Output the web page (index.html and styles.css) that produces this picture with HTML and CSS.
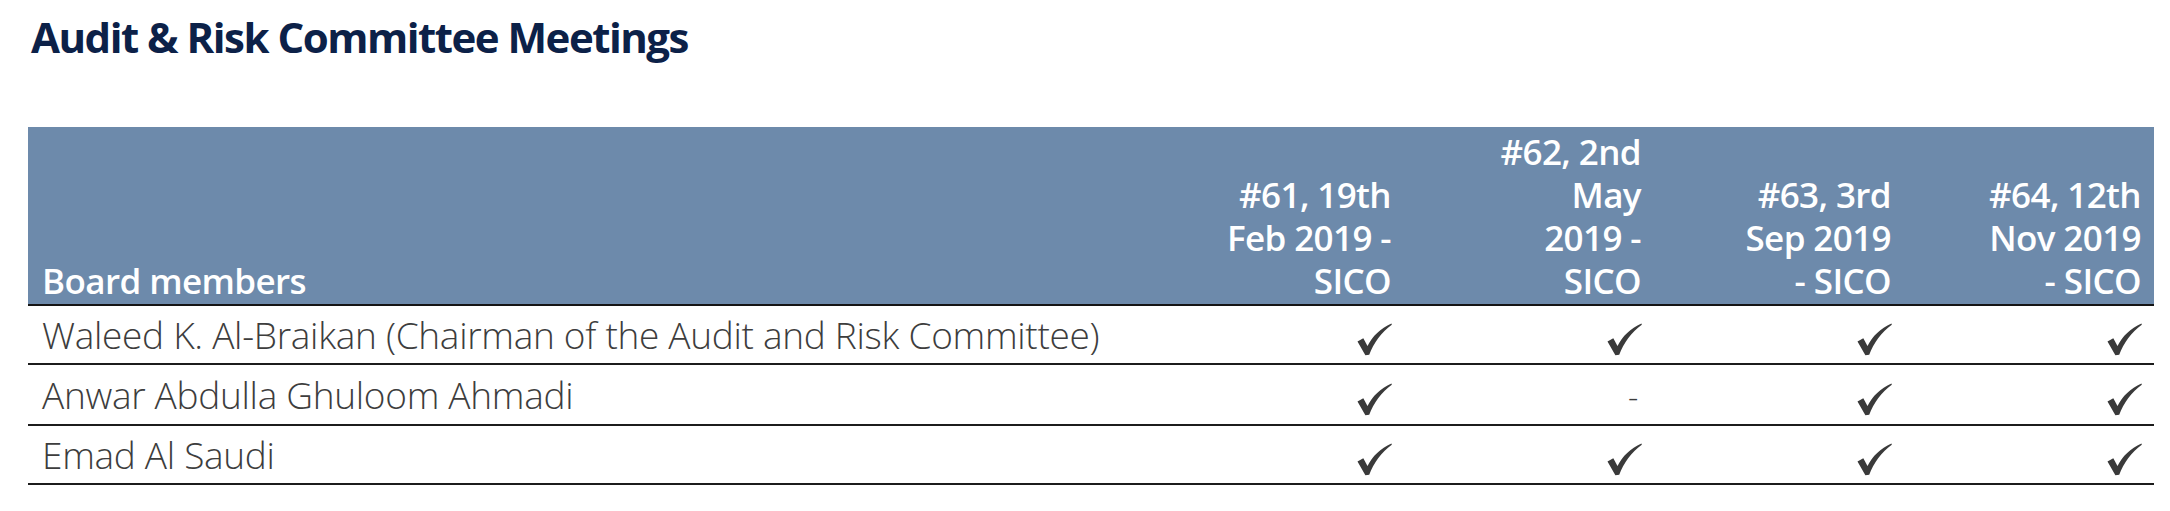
FILE: index.html
```html
<!DOCTYPE html>
<html lang="en">
<head>
<meta charset="utf-8">
<title>Audit &amp; Risk Committee Meetings</title>
<link rel="stylesheet" href="styles.css">
</head>
<body>
<main class="page">
  <h1 class="title">Audit &amp; Risk Committee Meetings</h1>
  <table class="meetings">
    <colgroup>
      <col class="col-name">
      <col class="col-meeting">
      <col class="col-meeting">
      <col class="col-meeting">
      <col class="col-meeting">
    </colgroup>
    <thead>
      <tr>
        <th class="th-name">Board members</th>
        <th class="th-meeting">#61, 19th<br>Feb 2019 -<br>SICO</th>
        <th class="th-meeting">#62, 2nd<br>May<br>2019 -<br>SICO</th>
        <th class="th-meeting">#63, 3rd<br>Sep 2019<br>- SICO</th>
        <th class="th-meeting">#64, 12th<br>Nov 2019<br>- SICO</th>
      </tr>
    </thead>
    <tbody>
      <tr>
        <td class="td-name">Waleed K. Al-Braikan (Chairman of the Audit and Risk Committee)</td>
        <td class="td-mark"><svg class="check" viewBox="0 0 36 33" aria-label="attended"><path d="M0.5 18.5 L6.5 15.2 L10.8 23.2 C16 13 24 5 35.5 0 L35.8 1.2 C25 9 17 20 12.6 32.2 L8.6 32.8 Z"/></svg></td>
        <td class="td-mark"><svg class="check" viewBox="0 0 36 33" aria-label="attended"><path d="M0.5 18.5 L6.5 15.2 L10.8 23.2 C16 13 24 5 35.5 0 L35.8 1.2 C25 9 17 20 12.6 32.2 L8.6 32.8 Z"/></svg></td>
        <td class="td-mark"><svg class="check" viewBox="0 0 36 33" aria-label="attended"><path d="M0.5 18.5 L6.5 15.2 L10.8 23.2 C16 13 24 5 35.5 0 L35.8 1.2 C25 9 17 20 12.6 32.2 L8.6 32.8 Z"/></svg></td>
        <td class="td-mark"><svg class="check" viewBox="0 0 36 33" aria-label="attended"><path d="M0.5 18.5 L6.5 15.2 L10.8 23.2 C16 13 24 5 35.5 0 L35.8 1.2 C25 9 17 20 12.6 32.2 L8.6 32.8 Z"/></svg></td>
      </tr>
      <tr>
        <td class="td-name">Anwar Abdulla Ghuloom Ahmadi</td>
        <td class="td-mark"><svg class="check" viewBox="0 0 36 33" aria-label="attended"><path d="M0.5 18.5 L6.5 15.2 L10.8 23.2 C16 13 24 5 35.5 0 L35.8 1.2 C25 9 17 20 12.6 32.2 L8.6 32.8 Z"/></svg></td>
        <td class="td-mark"><span class="dash">-</span></td>
        <td class="td-mark"><svg class="check" viewBox="0 0 36 33" aria-label="attended"><path d="M0.5 18.5 L6.5 15.2 L10.8 23.2 C16 13 24 5 35.5 0 L35.8 1.2 C25 9 17 20 12.6 32.2 L8.6 32.8 Z"/></svg></td>
        <td class="td-mark"><svg class="check" viewBox="0 0 36 33" aria-label="attended"><path d="M0.5 18.5 L6.5 15.2 L10.8 23.2 C16 13 24 5 35.5 0 L35.8 1.2 C25 9 17 20 12.6 32.2 L8.6 32.8 Z"/></svg></td>
      </tr>
      <tr>
        <td class="td-name">Emad Al Saudi</td>
        <td class="td-mark"><svg class="check" viewBox="0 0 36 33" aria-label="attended"><path d="M0.5 18.5 L6.5 15.2 L10.8 23.2 C16 13 24 5 35.5 0 L35.8 1.2 C25 9 17 20 12.6 32.2 L8.6 32.8 Z"/></svg></td>
        <td class="td-mark"><svg class="check" viewBox="0 0 36 33" aria-label="attended"><path d="M0.5 18.5 L6.5 15.2 L10.8 23.2 C16 13 24 5 35.5 0 L35.8 1.2 C25 9 17 20 12.6 32.2 L8.6 32.8 Z"/></svg></td>
        <td class="td-mark"><svg class="check" viewBox="0 0 36 33" aria-label="attended"><path d="M0.5 18.5 L6.5 15.2 L10.8 23.2 C16 13 24 5 35.5 0 L35.8 1.2 C25 9 17 20 12.6 32.2 L8.6 32.8 Z"/></svg></td>
        <td class="td-mark"><svg class="check" viewBox="0 0 36 33" aria-label="attended"><path d="M0.5 18.5 L6.5 15.2 L10.8 23.2 C16 13 24 5 35.5 0 L35.8 1.2 C25 9 17 20 12.6 32.2 L8.6 32.8 Z"/></svg></td>
      </tr>
    </tbody>
  </table>
</main>
</body>
</html>
```

FILE: styles.css
```css
html, body {
  margin: 0;
  padding: 0;
  background: #ffffff;
}

.page {
  padding: 0 16px 0 28px;
  font-family: "Open Sans", "Noto Sans", sans-serif;
}

.title {
  margin: 8px 0 62px 3px;
  font-size: 42px;
  line-height: 57px;
  font-weight: 700;
  letter-spacing: -1.5px;
  color: #0c2148;
}

.meetings {
  width: 2126px;
  border-collapse: collapse;
  table-layout: fixed;
}

.col-meeting {
  width: 250px;
}

.meetings thead tr {
  background: #6d8aab;
}

.meetings th {
  height: 175px;
  padding: 0 13px 2px 14px;
  vertical-align: bottom;
  color: #ffffff;
  font-size: 35px;
  line-height: 43px;
  font-weight: 600;
  letter-spacing: -0.6px;
  border-bottom: 2px solid #151515;
}

.th-name {
  text-align: left;
}

.th-meeting {
  text-align: right;
  white-space: nowrap;
}

.meetings td {
  height: 57px;
  padding: 0 12px 0 14px;
  border-bottom: 2px solid #1c1c1c;
  color: #3d3d3d;
  font-size: 37px;
  line-height: 57px;
  font-weight: 300;
  letter-spacing: -0.3px;
  vertical-align: middle;
}

.td-name {
  text-align: left;
  white-space: nowrap;
}

.td-mark {
  text-align: right;
}

.check {
  display: inline-block;
  width: 35px;
  height: 33px;
  vertical-align: middle;
  fill: #3a3a3a;
}

.dash {
  display: inline-block;
  padding-right: 4px;
  font-size: 32px;
}
```
